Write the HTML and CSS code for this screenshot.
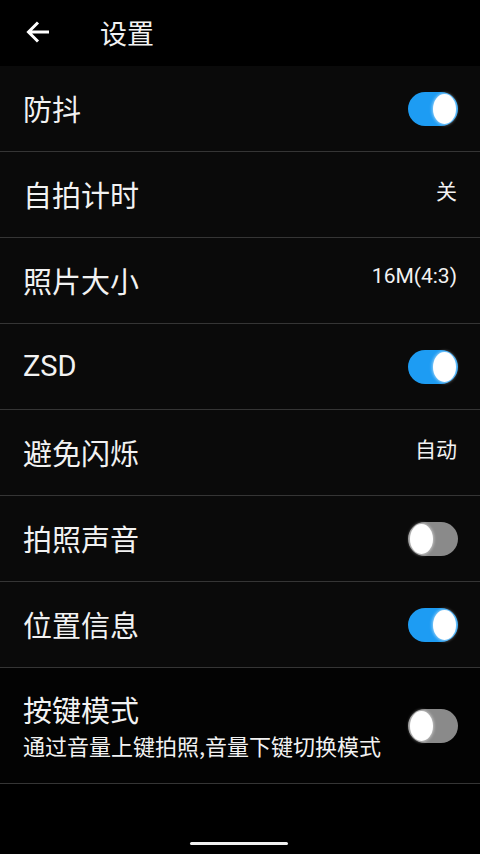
FILE: index.html
```html
<!DOCTYPE html>
<html lang="zh">
<head>
<meta charset="utf-8">
<link rel="stylesheet" href="styles.css">
</head>
<body>
<div class="screen">
  <header class="bar">
    <svg class="back" width="24" height="24" viewBox="0 0 24 24"><path d="M23 12H3M12 2.5L2.5 12L12 21.5" fill="none" stroke="#fff" stroke-width="3"/></svg>
    <span class="title">设置</span>
  </header>
  <div class="list">
    <div class="row"><span class="label">防抖</span><span class="switch on"><i></i></span></div>
    <div class="row"><span class="label">自拍计时</span><span class="value">关</span></div>
    <div class="row"><span class="label">照片大小</span><span class="value latin">16M(4:3)</span></div>
    <div class="row"><span class="label latin">ZSD</span><span class="switch on"><i></i></span></div>
    <div class="row"><span class="label">避免闪烁</span><span class="value">自动</span></div>
    <div class="row"><span class="label">拍照声音</span><span class="switch off"><i></i></span></div>
    <div class="row"><span class="label">位置信息</span><span class="switch on"><i></i></span></div>
    <div class="row tall"><div class="texts"><span class="label">按键模式</span><span class="sub">通过音量上键拍照,音量下键切换模式</span></div><span class="switch off"><i></i></span></div>
  </div>
  <div class="home"></div>
</div>
</body>
</html>
```
FILE: styles.css
```css
html, body { margin: 0; padding: 0; background: #000; }
body { font-family: "Noto Sans CJK SC", "Noto Sans", sans-serif; color: #f2f2f2; }
.screen { width: 480px; height: 854px; position: relative; background: #000; overflow: hidden; }
.bar { height: 66px; display: flex; align-items: center; background: #000; }
.back { margin-left: 26px; margin-top: -2px; }
.title { margin-left: 50px; font-size: 27px; line-height: 1; margin-top: -1px; }
.list { background: #0a0a0a; }
.row { height: 85px; border-bottom: 1px solid #353535; display: flex; align-items: center; justify-content: space-between; padding: 0 22px 0 23px; }
.row.tall { height: 115px; background: #030303; align-items: center; }
.label { font-size: 29px; line-height: 1; }
.latin { font-family: "Roboto", "Noto Sans", sans-serif; }
.label.latin { font-size: 29px; }
.value { font-size: 21px; line-height: 1; margin-bottom: 8px; margin-right: 1px; }
.value.latin { font-size: 21px; }
.texts { display: flex; flex-direction: column; gap: 10px; margin-top: 0; }
.sub { font-size: 22px; line-height: 1; }
.switch { width: 50px; height: 34px; border-radius: 17px; position: relative; display: block; }
.switch.on { background: #1d9cf3; }
.switch.off { background: #8a8a8a; }
.switch i { position: absolute; top: 2px; width: 23px; height: 30px; border-radius: 50%; background: #fff; box-shadow: 0 0 3px 1px rgba(255,255,255,0.5); }
.switch.on i { right: 2px; }
.switch.off i { left: 2px; }
.home { position: absolute; left: 190px; top: 842px; width: 98px; height: 3px; background: #f0f0f0; border-radius: 2px; }
```
